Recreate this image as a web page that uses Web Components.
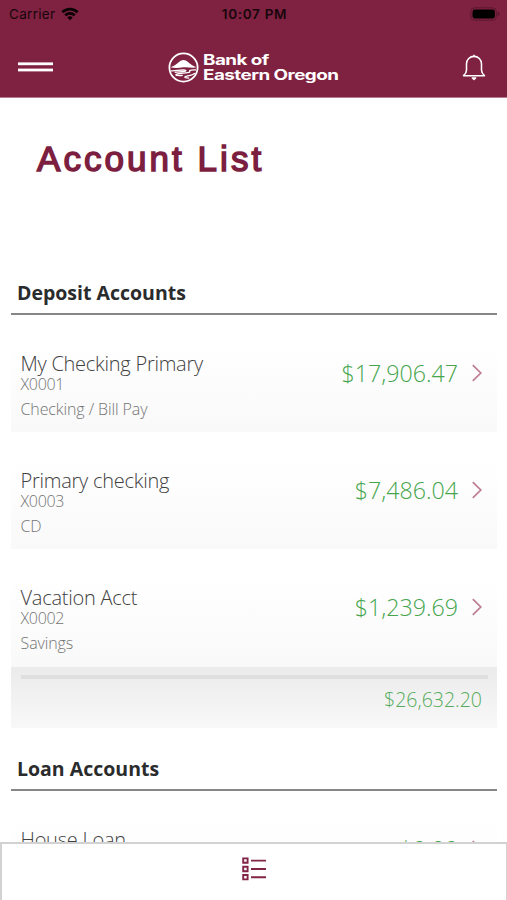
<!DOCTYPE html>
<html lang="en">
<head>
<meta charset="utf-8">
<meta name="viewport" content="width=device-width, initial-scale=1">
<title>Account List</title>
<style>
    html, body {
        height: 100%;
        margin: 0;
        overflow: hidden;
    }
    body {
        background: #fff;
        font-family: "Open Sans", "Noto Sans", sans-serif;
    }
</style>
</head>
<body>
<bank-app>
    <status-bar slot="top" carrier="Carrier" time="10:07 PM"></status-bar>
    <app-header slot="top">
        <bank-logo></bank-logo>
    </app-header>
    <page-title>Account List</page-title>
    <account-group heading="Deposit Accounts">
        <account-row name="My Checking Primary" number="X0001" type="Checking / Bill Pay" amount="$17,906.47"></account-row>
        <account-row name="Primary checking" number="X0003" type="CD" amount="$7,486.04"></account-row>
        <account-row name="Vacation Acct" number="X0002" type="Savings" amount="$1,239.69"></account-row>
        <group-total>$26,632.20</group-total>
    </account-group>
    <account-group heading="Loan Accounts">
        <account-row name="House Loan" amount="$0.00"></account-row>
    </account-group>
    <tab-bar slot="bottom"></tab-bar>
</bank-app>

<script>
class BankElement extends HTMLElement {
    constructor() {
        super();
        this.attachShadow({ mode: 'open' });
    }

    connectedCallback() {
        this.shadowRoot.innerHTML = this.render();
    }

    attr(name) {
        return this.getAttribute(name) || '';
    }
}

class BankApp extends BankElement {
    render() {
        return `
            <style>
                :host {
                    display: flex;
                    flex-direction: column;
                    height: 100vh;
                }
                main {
                    flex: 1;
                    min-height: 0;
                    overflow: hidden;
                }
            </style>
            <slot name="top"></slot>
            <main><slot></slot></main>
            <slot name="bottom"></slot>
        `;
    }
}

class StatusBar extends BankElement {
    render() {
        return `
            <style>
                :host {
                    display: grid;
                    grid-template-columns: 1fr auto 1fr;
                    align-items: center;
                    flex: none;
                    height: 28px;
                    padding: 0 7px 0 9px;
                    background: #7f2140;
                    color: #17060c;
                    font: 13.5px Inter, sans-serif;
                }
                .carrier {
                    display: flex;
                    align-items: center;
                    gap: 6px;
                    letter-spacing: 0.3px;
                }
                .time {
                    font-weight: 600;
                    font-size: 13.5px;
                    letter-spacing: 0.7px;
                }
                .battery {
                    justify-self: end;
                    margin-bottom: 1px;
                }
                svg {
                    display: block;
                }
            </style>
            <div class="carrier">
                <span>${this.attr('carrier')}</span>
                <svg width="18" height="14" viewBox="0 0 19 15" fill="none" stroke="#0a0205" stroke-width="2.9">
                    <path d="M1.3 5.6a11.7 11.7 0 0 1 16.4 0"/>
                    <path d="M4.4 9a7.3 7.3 0 0 1 10.2 0"/>
                    <path d="M9.5 14.3L6.6 11.3a4.2 4.2 0 0 1 5.8 0z" fill="#0a0205" stroke="none"/>
                </svg>
            </div>
            <div class="time">${this.attr('time')}</div>
            <svg class="battery" width="30" height="14" viewBox="0 0 30 14">
                <rect x=".8" y=".8" width="25.6" height="12.4" rx="4" fill="none" stroke="#5b1830"/>
                <rect x="2.5" y="2.5" width="22.4" height="9" rx="2.4" fill="#000"/>
                <path d="M27.6 4.8q2 1 2 2.2t-2 2.2z" fill="#5b1830"/>
            </svg>
        `;
    }
}

class AppHeader extends BankElement {
    render() {
        return `
            <style>
                :host {
                    display: grid;
                    grid-template-columns: 1fr auto 1fr;
                    align-items: center;
                    flex: none;
                    box-sizing: border-box;
                    height: 70px;
                    padding: 9px 21px 0 18px;
                    background: #7f2140;
                    border-bottom: 1px solid #b67b8d;
                    color: #fff;
                }
                .bell {
                    justify-self: end;
                }
                svg {
                    display: block;
                }
            </style>
            <svg width="35" height="10" viewBox="0 0 35 10" fill="#fff">
                <rect width="35" height="2.8" y=".4"/>
                <rect width="35" height="2.8" y="6.6"/>
            </svg>
            <slot></slot>
            <svg class="bell" width="24" height="27" viewBox="0 0 25 28" fill="none" stroke="#fff" stroke-width="1.6" stroke-linejoin="round">
                <path d="M4.7 16.5V10.2a7.8 7.8 0 0 1 15.6 0v6.3c0 2.4 1 4.1 3.1 6H1.6c2.1-1.9 3.1-3.6 3.1-6z"/>
                <path d="M12.5 2.3V.6M10.8 24.9h3.4l-1.7 1.5z"/>
            </svg>
        `;
    }
}

class BankLogo extends BankElement {
    render() {
        return `
            <style>
                :host {
                    display: flex;
                    align-items: center;
                    gap: 4px;
                    margin-left: 3px;
                    color: #fff;
                }
                svg {
                    display: block;
                }
                .name {
                    width: 137px;
                    font: 700 14px/15px Inter, sans-serif;
                    letter-spacing: -0.4px;
                    white-space: nowrap;
                }
                .name span {
                    display: block;
                    width: max-content;
                    transform: scaleX(1.345);
                    transform-origin: left;
                }
            </style>
            <svg width="31" height="31" viewBox="0 0 31 31">
                <circle cx="15.5" cy="15.5" r="14.1" fill="none" stroke="#fff" stroke-width="1.8"/>
                <path d="M2.5 15.2c5-1.5 7.5-4.6 10.2-6.4q2.8-1.7 5.5 0c2.9 1.8 5.3 4.9 10.3 6.4-3.8 1.2-8.6-.4-13 .1s-8.6 1.2-13-.1z" fill="#fff"/>
                <path d="M3 18.8c5 .3 7-.9 12-.8 3 .1 4 .8 1.4 1.4-3.4.8-6 .3-9.7 1M28 17.9c-3.4-.2-6.6.2-6.4 1.1.3.9 1 1.2-2 1.7-3.7.6-9.5.3-11.5 1.8-1 1 2.5 1.2 6.7.8M27.5 21.4c-2.4.4-2 1.2-4.4 1.8-3.4.8-6.6 1.2-6.3 2.1.4.8 2.7.4 4.4.8" fill="none" stroke="#fff" stroke-width="1.3"/>
            </svg>
            <div class="name"><span>Bank of</span><span>Eastern Oregon</span></div>
        `;
    }
}

class PageTitle extends BankElement {
    render() {
        return `
            <style>
                :host {
                    display: block;
                    padding: 38px 37px 0;
                    height: 134px;
                }
                h1 {
                    margin: 0;
                    color: #7c1e3f;
                    font: 400 35px/46px "Liberation Sans", Arial, sans-serif;
                    letter-spacing: 3.05px;
                    -webkit-text-stroke: 1.5px #7c1e3f;
                    white-space: nowrap;
                }
            </style>
            <h1><slot></slot></h1>
        `;
    }
}

class AccountGroup extends BankElement {
    render() {
        return `
            <style>
                :host {
                    display: block;
                    padding: 0 10px 18px 11px;
                }
                h2 {
                    box-sizing: border-box;
                    height: 45px;
                    margin: 0;
                    padding-left: 6px;
                    border-bottom: 2px solid #868686;
                    color: #2a2b2c;
                    font-size: 19.5px;
                    font-weight: 700;
                    line-height: 45px;
                }
            </style>
            <h2>${this.attr('heading')}</h2>
            <slot></slot>
        `;
    }
}

class AccountRow extends BankElement {
    render() {
        return `
            <style>
                :host {
                    display: flex;
                    justify-content: space-between;
                    box-sizing: border-box;
                    height: 117.2px;
                    padding: 36px 15px 0 9.5px;
                    background: linear-gradient(#fff 25%, #f9f9f9);
                    font-weight: 300;
                    white-space: nowrap;
                }
                .name {
                    color: #414141;
                    font-size: 20px;
                    letter-spacing: -0.25px;
                    line-height: 26px;
                }
                .number, .type {
                    color: #747474;
                    font-size: 16px;
                    letter-spacing: -0.1px;
                    line-height: 17px;
                }
                .number {
                    margin-top: -1px;
                    letter-spacing: -0.3px;
                }
                .type {
                    margin-top: 8px;
                }
                .value {
                    display: flex;
                    align-items: center;
                    gap: 14px;
                    height: 44px;
                    color: #45a54c;
                    font-size: 23.2px;
                }
                svg {
                    display: block;
                }
            </style>
            <div>
                <div class="name">${this.attr('name')}</div>
                <div class="number">${this.attr('number')}</div>
                <div class="type">${this.attr('type')}</div>
            </div>
            <div class="value">
                <span>${this.attr('amount')}</span>
                <svg width="10" height="18" viewBox="0 0 10 18" fill="none" stroke="#bc7b90" stroke-width="1.7">
                    <path d="M.8 1.2L8.8 9l-8 7.8"/>
                </svg>
            </div>
        `;
    }
}

class GroupTotal extends BankElement {
    render() {
        return `
            <style>
                :host {
                    display: block;
                    box-sizing: border-box;
                    height: 61.4px;
                    padding: 8.4px 9px 0 10px;
                    background: linear-gradient(#ebebeb, #f8f8f8);
                }
                .rule {
                    height: 4px;
                    background: #dfdfdf;
                }
                .sum {
                    padding-right: 6px;
                    color: #55ab5b;
                    font-size: 19.5px;
                    font-weight: 300;
                    line-height: 42px;
                    text-align: right;
                }
            </style>
            <div class="rule"></div>
            <div class="sum"><slot></slot></div>
        `;
    }
}

class TabBar extends BankElement {
    render() {
        return `
            <style>
                :host {
                    display: flex;
                    justify-content: center;
                    flex: none;
                    box-sizing: border-box;
                    height: 58px;
                    padding-top: 13px;
                    border: 2px solid #d2d2d2;
                    border-right-width: 1px;
                    border-bottom: 0;
                    background: #fff;
                }
            </style>
            <svg width="24" height="24" viewBox="0 0 24 24" fill="none" stroke="#812546" stroke-width="1.9">
                <path d="M1.2 1.4h4.4v4.4H1.2zM1.2 9.8h4.4v4.4H1.2zM1.2 18h4.4v4.4H1.2zM9 3.6h15M9 12h15M9 20.2h15"/>
            </svg>
        `;
    }
}

customElements.define('bank-app', BankApp);
customElements.define('status-bar', StatusBar);
customElements.define('app-header', AppHeader);
customElements.define('bank-logo', BankLogo);
customElements.define('page-title', PageTitle);
customElements.define('account-group', AccountGroup);
customElements.define('account-row', AccountRow);
customElements.define('group-total', GroupTotal);
customElements.define('tab-bar', TabBar);
</script>
</body>
</html>
